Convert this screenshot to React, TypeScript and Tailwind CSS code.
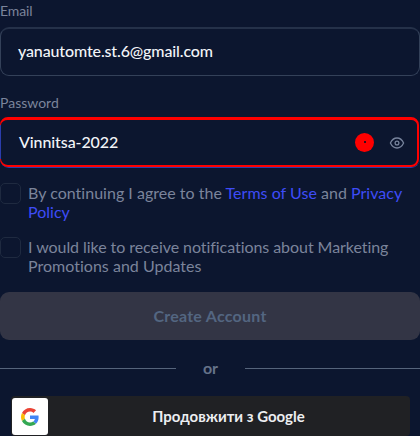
import React from "react";

function Checkbox() {
  return <span role="checkbox" aria-checked="false" className="h-[21px] w-[21px] shrink-0 rounded-[5px] border border-[#1f2a40]" />;
}

function EyeIcon() {
  return (
    <svg width="16" height="14" viewBox="0 0 16 14" fill="none" stroke="#77839c" strokeWidth="1.3">
      <path d="M1.400 7C2.900 3.800 5.100 2 8 2s5.100 1.800 6.600 5C13.100 10.200 10.900 12 8 12S2.900 10.200 1.400 7Z" />
      <circle cx="8" cy="7" r="1.900" />
    </svg>
  );
}

function GoogleLogo() {
  return (
    <svg width="18" height="18" viewBox="0 0 48 48">
      <path fill="#EA4335" d="M24 9.500c3.540 0 6.710 1.220 9.210 3.600l6.850-6.850C35.900 2.380 30.470 0 24 0 14.620 0 6.510 5.380 2.560 13.220l7.980 6.190C12.430 13.720 17.740 9.500 24 9.500z" />
      <path fill="#4285F4" d="M46.980 24.550c0-1.570-.15-3.090-.38-4.550H24v9.020h12.940c-.58 2.960-2.260 5.480-4.780 7.180l7.730 6c4.510-4.180 7.090-10.360 7.090-17.650z" />
      <path fill="#FBBC05" d="M10.530 28.590c-.48-1.450-.76-2.990-.76-4.590s.27-3.140.76-4.590l-7.980-6.190C.92 16.460 0 20.120 0 24c0 3.880.92 7.540 2.560 10.780l7.970-6.190z" />
      <path fill="#34A853" d="M24 48c6.480 0 11.930-2.130 15.890-5.810l-7.730-6c-2.150 1.450-4.920 2.300-8.160 2.300-6.260 0-11.570-4.220-13.470-9.910l-7.980 6.190C6.510 42.620 14.620 48 24 48z" />
    </svg>
  );
}

export default function App() {
  return (
    <main className="flex h-[436px] w-[420px] flex-col overflow-hidden bg-[#0c162f] font-['Lato','Noto_Sans',sans-serif] text-[#7b849b] [font-variant-ligatures:none]">
      <label className="mt-px h-[26px] text-[14px] leading-5 tracking-[-0.1px]">Email</label>
      <div className="flex h-[49px] shrink-0 items-center rounded-[9px] border border-t-2 border-[#344159] border-t-[#253149] pb-[3px] pl-[17px] text-[16px] font-medium text-[#f2f4f8]">
        <span className="whitespace-nowrap tracking-[-0.13px]">yanautomte.st.6@gmail.com</span>
      </div>
      <label className="mt-[17px] h-[24px] shrink-0 text-[14px] leading-5">Password</label>
      <div className="relative h-[51px] shrink-0 rounded-[9px] border-b border-[#2b3dac]">
        <span className="absolute left-0 top-[8px] h-[34px] w-px bg-[#2b3dac]" />
        <div className="flex h-[50px] w-[419px] items-center rounded-[8px] border-2 border-l border-t-[3px] border-[#ff0000] pl-[18px] text-[16px] font-medium text-[#f2f4f8]">
          <span className="whitespace-nowrap pb-px tracking-[-0.1px]">Vinnitsa-2022</span>
          <span className="mb-px ml-auto flex h-[19px] w-[19px] items-center justify-center rounded-full bg-[#ff0000]">
            <span className="h-[2px] w-[2px] bg-[#301020]" />
          </span>
          <span className="ml-[15px] mr-[12px]"><EyeIcon /></span>
        </div>
        <span className="absolute left-0 top-[8px] h-[34px] w-px bg-[#2b3dac]" />
      </div>
      <div className="mt-[15px] flex h-[54px] shrink-0">
        <Checkbox />
        <p className="ml-[7px] whitespace-nowrap text-[16px] leading-[19px] tracking-[0.02px]">
          By continuing I agree to the <a className="text-[#3e4cf7]">Terms of Use</a> and <a className="text-[#3e4cf7]">Privacy<br />Policy</a>
        </p>
      </div>
      <div className="flex h-[55px] shrink-0">
        <Checkbox />
        <p className="ml-[7px] whitespace-nowrap text-[16px] leading-[19px] tracking-[-0.06px]">I would like to receive notifications about Marketing<br /><span className="tracking-[0.02px]">Promotions and Updates</span></p>
      </div>
      <button className="h-[48px] shrink-0 rounded-[9px] bg-[#333545] text-[16px] font-bold tracking-[0.25px] text-[#536681]">Create Account</button>
      <div className="mt-[16px] flex h-6 shrink-0 items-center justify-between">
        <span className="h-px w-[176px] bg-[#56647b]" />
        <span className="pb-px text-[16px] font-bold leading-6 text-[#657289]">or</span>
        <span className="h-px w-[175px] bg-[#56647b]" />
      </div>
      <div className="ml-[11px] mt-[16px] flex h-[40px] w-[399px] shrink-0 rounded-[4px] bg-[#202124] p-[1px]">
        <span className="mt-px flex h-[37px] w-[36px] items-center justify-center rounded-[3px] bg-white"><GoogleLogo /></span>
        <span className="flex h-[38px] flex-1 items-center justify-center whitespace-nowrap text-[15px] font-bold text-[#eceef1]">Продовжити з Google</span>
      </div>
    </main>
  );
}
